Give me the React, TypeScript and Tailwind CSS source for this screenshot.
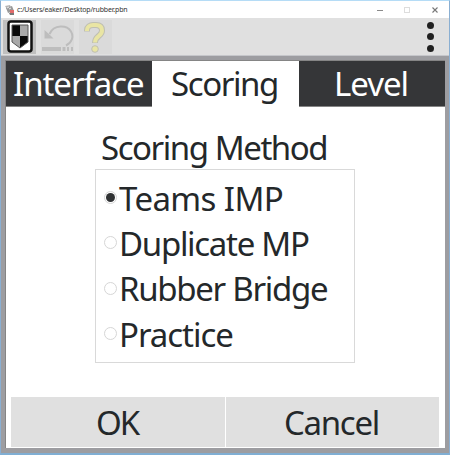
import type { ReactNode } from "react";

const font = "font-['Noto_Sans',sans-serif] text-[33px] leading-[44px] whitespace-nowrap";

function Tab({ active, className, children }: { active?: boolean; className: string; children: ReactNode }) {
  return (
    <div
      className={`h-[46px] pt-px ${font} ${className} ${
        active ? "bg-white text-[#24282a]" : "border-b border-[#858585] bg-[#353638] text-white"
      }`}
    >
      {children}
    </div>
  );
}

function Option({ label, tracking, checked }: { label: string; tracking: string; checked?: boolean }) {
  return (
    <div className="flex h-[45.3px] items-center pl-2">
      <span className="mt-[-2px] mr-[2px] flex size-[13px] shrink-0 items-center justify-center rounded-full border border-[#d6d6d6] bg-white">
        {checked && <span className="size-[9px] shrink-0 rounded-full bg-[#303234]" />}
      </span>
      <span className={`${font} ${tracking}`}>{label}</span>
    </div>
  );
}

function TitleBar() {
  return (
    <div className="flex h-[17px] shrink-0 items-center bg-white">
      <svg className="ml-[4px] shrink-0" width="10" height="12" viewBox="0 0 10 12">
        <path d="M0 2 5 1 7 6 3 7Z" fill="#b5b5b5" />
        <path d="M1 4 7 2 9 7 3 9Z" fill="#999" />
        <path d="M2 4 4 3M4 5 6 4" stroke="#eee" />
        <path d="M5 6h4v3H5Z" fill="#e06a6a" />
        <path d="M4 9h5v2H5Z" fill="#777" />
      </svg>
      <span className="ml-[2px] font-['Noto_Sans',sans-serif] text-[7px] leading-[14px] tracking-[-0.18px] whitespace-nowrap text-[#333]">
        c:/Users/eaker/Desktop/rubber.pbn
      </span>
      <svg className="mr-[10px] ml-auto" width="62" height="10" viewBox="0 0 62 10" fill="none">
        <path d="M0 5.5h6" stroke="#8a8a8a" />
        <rect x="27.5" y="2.5" width="5" height="5" stroke="#ddd" />
        <path d="M55.5 2.5 60.5 7.5M60.5 2.5 55.5 7.5" stroke="#777" strokeWidth="1.1" />
      </svg>
    </div>
  );
}

function Toolbar() {
  return (
    <div className="flex h-[37px] shrink-0 items-center bg-[#e0e0e0] pl-[2px]">
      <div className="flex h-[34px] w-[33px] items-center justify-center bg-[#bfbfbf]">
        <svg width="26" height="33" viewBox="0 0 26 33">
          <rect x="1.5" y="1.5" width="23" height="30" rx="2.5" fill="#fff" stroke="#111" strokeWidth="2.5" />
          <path d="M5 5h8v11H5Z" fill="#080808" />
          <path d="M13 5h8v11h-8Z" fill="#a9a9a9" />
          <path d="M5 16h8v12L5 22Z" fill="#a9a9a9" />
          <path d="M13 16h8v6l-8 6Z" fill="#080808" />
          <path d="M5 5h16v17l-8 6-8-6Z" fill="none" stroke="#555" />
        </svg>
      </div>
      <div className="ml-[5px] flex h-[34px] w-[33px] items-center justify-center bg-[#dadada]">
        <svg width="33" height="34" viewBox="0 0 33 34" fill="none">
          <path d="M8.5 14C13 4 26 5 30 11.500c3 5 1 11-5 14" stroke="#bdbdbd" strokeWidth="2" />
          <path d="M3.500 10v8.500h9l-3-3Z" fill="#bdbdbd" />
          <path d="M1 29h19M21.500 29h3M26 29h2M30 29h2" stroke="#bdbdbd" strokeWidth="4" />
        </svg>
      </div>
      <div className="ml-[5px] flex h-[34px] w-[33px] items-center bg-[#dadada] pl-[4px]">
        <svg width="24" height="34" viewBox="0 0 24 34" fill="none">
          <path d="M4 11.500V10c0-3 3-5 6-5h3c4 0 6 2 6 5.500 0 6-7 5-7 12.500" stroke="#bfbfb2" strokeWidth="6" />
          <path d="M4 11V10c0-3 3-5 6-5h3c4 0 6 2 6 5.500 0 6-7 5-7 12" stroke="#e9e5a4" strokeWidth="4" />
          <circle cx="12" cy="29" r="3.300" fill="#e9e5a4" stroke="#bfbfb2" />
        </svg>
      </div>
      <div className="mr-[15px] ml-auto flex flex-col gap-[4.5px]">
        <span className="size-[7px] rounded-full bg-[#202020]" />
        <span className="size-[7px] rounded-full bg-[#202020]" />
        <span className="size-[7px] rounded-full bg-[#202020]" />
      </div>
    </div>
  );
}

export default function App() {
  return (
    <div className="flex h-[455px] w-[450px] flex-col overflow-hidden border-t border-r border-b-2 border-l border-t-[#b5dcf6] border-r-[#8aafd2] border-b-[#80aed3] border-l-[#8aafd2] bg-[#9d9da1] text-[#24282a]">
      <TitleBar />
      <Toolbar />
      <div className="h-px shrink-0 bg-[#c5c6ca]" />
      <div className="mt-[4px] mr-[4px] mb-[5px] ml-[4px] flex min-h-0 flex-1 flex-col border-t border-l border-[#858585] bg-white">
        <div className="flex shrink-0">
          <Tab className="w-[146px] pl-[7px] tracking-[-1.05px]">Interface</Tab>
          <Tab active className="w-[147px] pl-[19px] tracking-[-1.4px]">Scoring</Tab>
          <Tab className="flex-1 pl-[35px] tracking-[-1px]">Level</Tab>
        </div>
        <div className={`mt-[19px] ml-[95px] ${font} tracking-[-1.45px]`}>Scoring Method</div>
        <div className="-mt-px ml-[89px] h-[194px] w-[260px] shrink-0 border border-[#d9d9d9] pt-[6px]">
          <Option checked label="Teams IMP" tracking="tracking-[-0.6px]" />
          <Option label="Duplicate MP" tracking="tracking-[-1.3px]" />
          <Option label="Rubber Bridge" tracking="tracking-[-1.3px]" />
          <Option label="Practice" tracking="tracking-[-1.05px]" />
        </div>
        <div className="mt-auto mr-[6px] mb-px ml-[5px] flex h-[50px] shrink-0 gap-px">
          <div className={`w-[214px] bg-[#e0e0e0] pt-1 pl-[85px] ${font} tracking-[-2px]`}>OK</div>
          <div className={`flex-1 bg-[#e0e0e0] pt-1 pl-[58px] ${font} tracking-[-1.3px]`}>Cancel</div>
        </div>
      </div>
    </div>
  );
}
